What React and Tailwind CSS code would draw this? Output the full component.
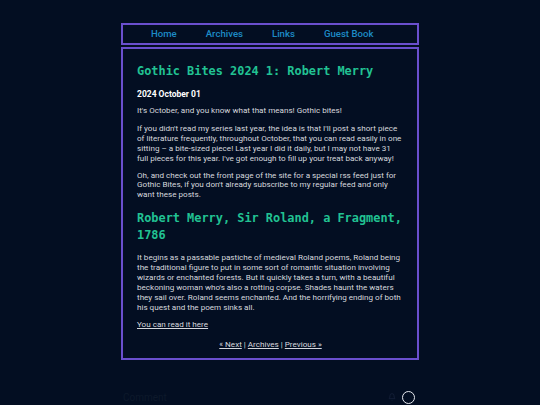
export default function App() {
  const body = { fontFamily: "Roboto, 'Liberation Sans', sans-serif" };
  const mono = { fontFamily: "'DejaVu Sans Mono', 'Liberation Mono', monospace" };
  return (
    <div className="min-h-[405px] w-[540px] bg-[#030e22] overflow-hidden" style={body}>
      <div className="mx-auto w-[298px] pt-[23px]">
        <nav className="h-[22px] border-2 border-[#6a4fce] flex items-center pl-[28px] gap-[29px] text-[9.6px] font-medium text-[#1d8bc6]">
          <span>Home</span>
          <span>Archives</span>
          <span>Links</span>
          <span>Guest Book</span>
        </nav>
        <main className="mt-[2px] border-2 border-[#6a4fce] pl-[14px] pr-[13px] pt-[14px] pb-[8px] text-[8.1px] leading-[9.9px] text-[#d6d8de]">
          <h1 className="text-[11.9px] leading-[16px] font-bold text-[#21c293] mb-[9px]" style={mono}>
            Gothic Bites 2024 1: Robert Merry
          </h1>
          <div className="text-[8.5px] leading-[12px] font-bold text-white mb-[6px]">2024 October 01</div>
          <p className="mb-[8px]">It's October, and you know what that means! Gothic bites!</p>
          <p className="mb-[7px]">
            If you didn't read my series last year, the idea is that I'll post a short piece of literature frequently, throughout October, that you can read easily in one sitting – a bite-sized piece! Last year I did it daily, but I may not have 31 full pieces for this year. I've got enough to fill up your treat back anyway!
          </p>
          <p className="mb-[10px]">
            Oh, and check out the front page of the site for a special rss feed just for Gothic Bites, if you don't already subscribe to my regular feed and only want these posts.
          </p>
          <h2 className="text-[11.9px] leading-[16.5px] font-bold text-[#21c293] mb-[10px]" style={mono}>
            Robert Merry, Sir Roland, a Fragment, 1786
          </h2>
          <p className="mb-[7px]">
            It begins as a passable pastiche of medieval Roland poems, Roland being the traditional figure to put in some sort of romantic situation involving wizards or enchanted forests. But it quickly takes a turn, with a beautiful beckoning woman who's also a rotting corpse. Shades haunt the waters they sail over. Roland seems enchanted. And the horrifying ending of both his quest and the poem sinks all.
          </p>
          <p className="mb-[10px]">
            <a className="underline">You can read it here</a>
          </p>
          <p className="text-center">
            <a className="underline">« Next</a> | <a className="underline">Archives</a> | <a className="underline">Previous »</a>
          </p>
        </main>
        <div className="mt-[30px] flex items-center justify-between pl-[2px] pr-[4px]">
          <span className="text-[10px] text-[#0d192b]">Comment</span>
          <div className="flex items-center gap-[6px]">
            <svg width="8" height="8" viewBox="0 0 24 24" fill="none" stroke="#16213a" strokeWidth="2.5">
              <path d="M6 8a6 6 0 0 1 12 0c0 7 3 9 3 9H3s3-2 3-9" />
              <path d="M10.3 21a1.94 1.94 0 0 0 3.4 0" />
            </svg>
            <div className="w-[13px] h-[13px] rounded-full border-[1.5px] border-[#e8eaf0]"></div>
          </div>
        </div>
      </div>
    </div>
  );
}
